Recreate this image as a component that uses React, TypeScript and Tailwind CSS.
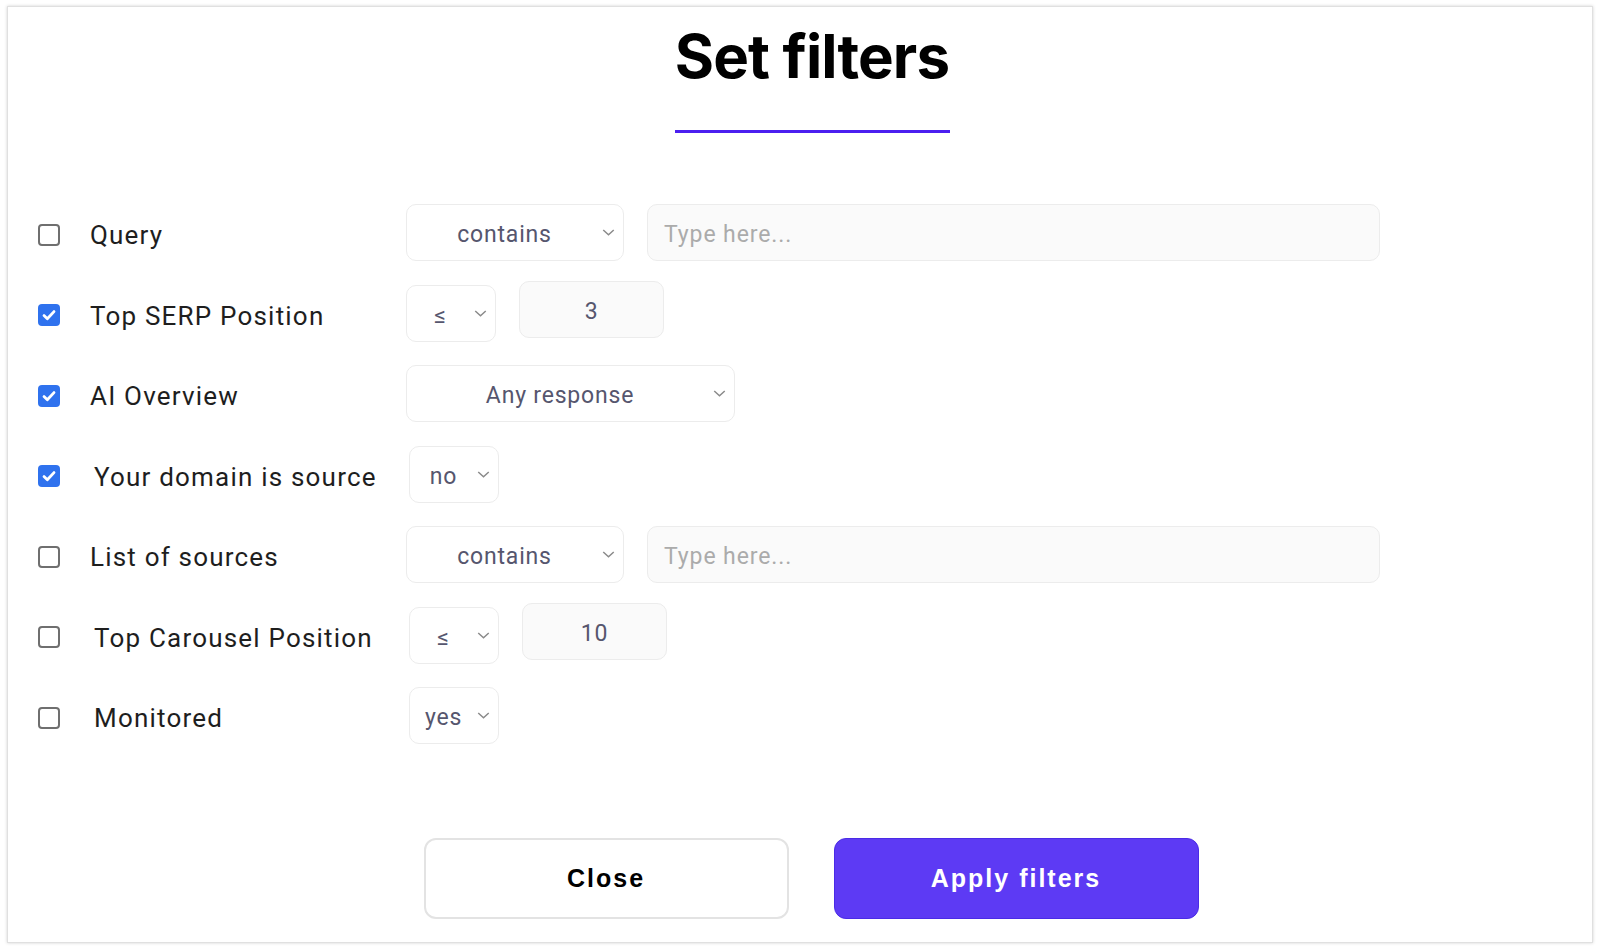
import { useState } from 'react';

type Row = {
  label: string;
  checked: boolean;
  op: string;
  opWidth: string;
  input?: 'text' | 'number';
  value?: string;
  shift?: boolean;
};

const ROWS: Row[] = [
  { label: 'Query', checked: false, op: 'contains', opWidth: 'w-[218px]', input: 'text' },
  { label: 'Top SERP Position', checked: true, op: '≤', opWidth: 'w-[90px]', input: 'number', value: '3' },
  { label: 'AI Overview', checked: true, op: 'Any response', opWidth: 'w-[329px]' },
  { label: 'Your domain is source', checked: true, op: 'no', opWidth: 'w-[90px]', shift: true },
  { label: 'List of sources', checked: false, op: 'contains', opWidth: 'w-[218px]', input: 'text' },
  { label: 'Top Carousel Position', checked: false, op: '≤', opWidth: 'w-[90px]', input: 'number', value: '10', shift: true },
  { label: 'Monitored', checked: false, op: 'yes', opWidth: 'w-[90px]', shift: true },
];

function Checkbox({ checked, onToggle }: { checked: boolean; onToggle: () => void }) {
  return (
    <button
      type="button"
      onClick={onToggle}
      className={
        checked
          ? 'mt-[4px] flex h-[22px] w-[22px] shrink-0 items-center justify-center rounded-[4px] bg-[#2f72ee]'
          : 'mt-[4px] h-[22px] w-[22px] shrink-0 rounded-[4px] border-2 border-[#6f6f6f] bg-white'
      }
      aria-pressed={checked}
    >
      {checked && (
        <svg viewBox="0 0 16 16" className="h-[16px] w-[16px]">
          <path d="M3 8.6 6.3 11.8 13 4.6" fill="none" stroke="white" strokeWidth="2.8" strokeLinecap="round" strokeLinejoin="round" />
        </svg>
      )}
    </button>
  );
}

function Chevron() {
  return (
    <svg viewBox="0 0 14 8" className="h-[7px] w-[13px] shrink-0">
      <path d="M1 1.2 7 6.6 13 1.2" fill="none" stroke="#8a8a8a" strokeWidth="1.7" />
    </svg>
  );
}

function FilterRow({ row }: { row: Row }) {
  const [checked, setChecked] = useState(row.checked);
  return (
    <div className="flex h-[57px] items-center">
      <Checkbox checked={checked} onToggle={() => setChecked(!checked)} />
      <span
        className={`${row.shift ? 'ml-[34px] w-[315px]' : 'ml-[30px] w-[316px]'} shrink-0 pt-[6px] text-[26px] tracking-[1.2px] text-[#1e1e1e]`}
      >
        {row.label}
      </span>
      <div
        className={`${row.opWidth} flex h-[57px] shrink-0 items-center rounded-[10px] border border-[#ececec] bg-white pr-[8px] text-[23px] tracking-[0.8px] text-[#56566e]`}
      >
        <span className="flex-1 pt-[6px] text-center">{row.op}</span>
        <Chevron />
      </div>
      {row.input === 'text' && (
        <div className="ml-[23px] flex h-[57px] w-[733px] items-center rounded-[10px] border border-[#ececec] bg-[#fafafa] pl-[16px] pt-[6px] text-[23px] tracking-[0.9px] text-[#ababab]">
          Type here...
        </div>
      )}
      {row.input === 'number' && (
        <div className="mb-[8px] ml-[23px] flex h-[57px] w-[145px] items-center justify-center rounded-[10px] border border-[#ececec] bg-[#fafafa] pt-[6px] text-[23px] tracking-[0.8px] text-[#56566e]">
          {row.value}
        </div>
      )}
    </div>
  );
}

export default function App() {
  return (
    <div className="h-[950px] w-[1600px] bg-white pl-[7px] pt-[6px] font-['Roboto',sans-serif]">
      <div className="flex h-[937px] w-[1586px] flex-col border border-[#e0e0e0] bg-white shadow-[0_0_3px_rgba(0,0,0,0.18)]">
        <div className="flex flex-col items-center pl-[24px] pt-[19px]">
          <h1 className="font-['Inter',sans-serif] text-[60px] font-bold leading-none tracking-[-0.015em] text-black">
            Set filters
          </h1>
          <div className="mt-[44px] h-[3px] w-[275px] bg-[#4b1ff0]" />
        </div>

        <div className="mt-[71px] flex flex-col gap-[23.5px] pl-[30px]">
          {ROWS.map((r) => (
            <FilterRow key={r.label} row={r} />
          ))}
        </div>

        <div className="mt-[94px] flex justify-center gap-[45px] pl-[22px] font-['Liberation_Sans',sans-serif] text-[25px] font-bold tracking-[2px]">
          <button
            type="button"
            className="h-[81px] w-[365px] rounded-[12px] border-2 border-[#e3e3e3] bg-white text-black"
          >
            Close
          </button>
          <button
            type="button"
            className="h-[81px] w-[365px] rounded-[12px] border border-[#4a2be6] bg-[#5d3af4] text-white"
          >
            Apply filters
          </button>
        </div>
      </div>
    </div>
  );
}
